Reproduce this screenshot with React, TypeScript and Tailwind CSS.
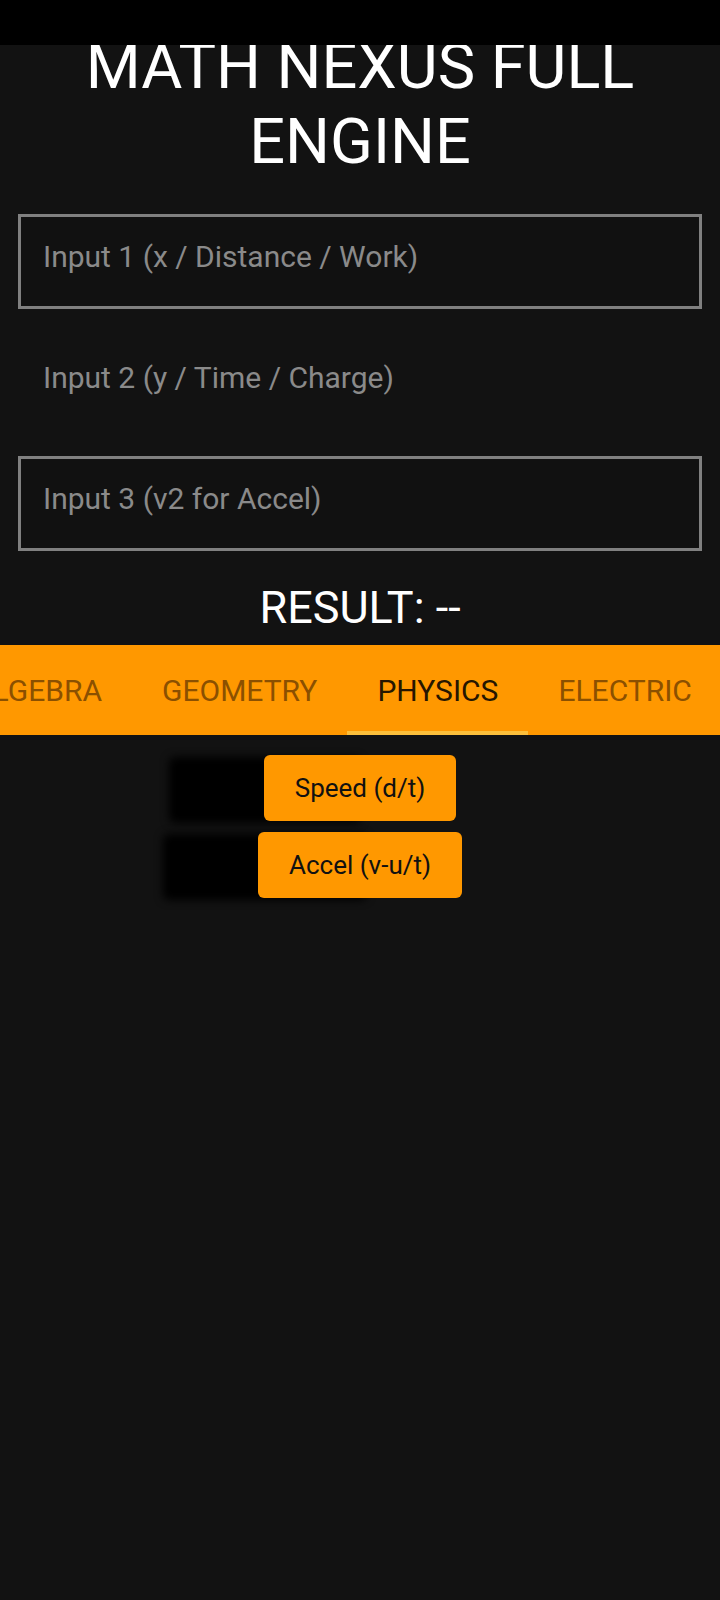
import React, { useState } from 'react';

const tabs = ['ALGEBRA', 'GEOMETRY', 'PHYSICS', 'ELECTRIC'];

const fields = [
  { key: 'a', placeholder: 'Input 1 (x / Distance / Work)', bordered: true },
  { key: 'b', placeholder: 'Input 2 (y / Time / Charge)', bordered: false },
  { key: 'c', placeholder: 'Input 3 (v2 for Accel)', bordered: true },
];

const actions = ['Speed (d/t)', 'Accel (v-u/t)'];

export default function App() {
  const [active, setActive] = useState('PHYSICS');
  const [values, setValues] = useState<Record<string, string>>({ a: '', b: '', c: '' });

  return (
    <div className="relative min-h-[1600px] bg-[#121212] font-['Roboto','Liberation_Sans',sans-serif]">
      {/* status bar strip */}
      <div className="absolute top-0 left-0 right-0 h-[45px] bg-black z-10" />

      <div className="pt-[29px]">
        <h1 className="text-center text-white text-[63px] leading-[75px] font-normal px-4">
          MATH NEXUS FULL ENGINE
        </h1>

        <div className="mt-[35px] flex flex-col gap-[26px] px-[18px]">
          {fields.map(f => (
            <input
              key={f.key}
              value={values[f.key]}
              onChange={e => setValues(prev => ({ ...prev, [f.key]: e.target.value }))}
              placeholder={f.placeholder}
              className={`h-[95px] w-full pl-[22px] pb-[10px] text-[30px] text-white placeholder:text-[#8a8a8a] outline-none ${
                f.bordered ? 'bg-[#111111] border-[3px] border-[#808080]' : 'border-[3px] border-transparent bg-transparent'
              }`}
            />
          ))}
        </div>

        <div className="mt-[32px] text-center text-white text-[45px] leading-[50px]">RESULT: --</div>

        {/* tab strip, scrolled so ALGEBRA is cut off */}
        <div className="mt-[12px] h-[90px] bg-[#ff9800] overflow-hidden">
          <div className="flex h-full ml-[-57px]">
            {tabs.map(t => (
              <button
                key={t}
                onClick={() => setActive(t)}
                className={`relative h-full shrink-0 px-[30px] text-[30px] ${
                  active === t ? 'text-[#261600]' : 'text-[#8b5000]'
                }`}
              >
                {t}
                {active === t && <span className="absolute left-0 right-0 bottom-0 h-[4px] bg-[#fbbf3c]" />}
              </button>
            ))}
          </div>
        </div>

        <div className="mt-[20px] flex flex-col items-center gap-[11px]">
          {actions.map(a => (
            <button
              key={a}
              className="h-[66px] rounded-[6px] bg-[#ff9800] px-[31px] text-[26px] text-[#111111] shadow-[-95px_2px_8px_#000000]"
            >
              {a}
            </button>
          ))}
        </div>
      </div>
    </div>
  );
}
